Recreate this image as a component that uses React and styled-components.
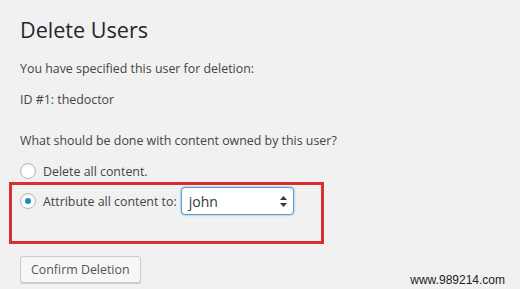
import styled, { createGlobalStyle } from 'styled-components';

const GlobalStyle = createGlobalStyle`
	body {
		margin: 0;
		background: #f1f1f1;
		font-family: "Open Sans", "Liberation Sans", sans-serif;
		font-size: 12.4px;
		color: #444;
	}
`;

const Page = styled.div`
	position: relative;
	width: 520px;
	height: 289px;
	padding: 15px 20px 0;
	box-sizing: border-box;
	overflow: hidden;
`;

const Title = styled.h1`
	margin: 0 0 15px;
	font-size: 21.6px;
	font-weight: 400;
	line-height: 29px;
	color: #23282d;
`;

const Text = styled.p`
	margin: ${({ $gap }) => $gap || '0 0 11px'};
	line-height: 20px;
`;

const Option = styled.label`
	display: flex;
	align-items: center;
	height: ${({ $height }) => $height || '20px'};
	gap: 7px;
`;

const Radio = styled.span`
	position: relative;
	flex: none;
	width: 16px;
	height: 16px;
	box-sizing: border-box;
	border-radius: 50%;
	border: 1px solid #b4b9be;
	background: #fff;
	box-shadow: inset 0 1px 2px rgba(0, 0, 0, 0.1);
	${({ $checked }) =>
		$checked &&
		`
		&::after {
			content: '';
			position: absolute;
			left: 4px;
			top: 4px;
			width: 6px;
			height: 6px;
			border-radius: 50%;
			background: #1e8cbe;
		}
	`}
`;

const Highlight = styled.div`
	margin: 1px 0 0 -11px;
	width: 315px;
	height: 62px;
	box-sizing: border-box;
	border: 3px solid #d9302f;
	padding: 2px 0 0 8px;
`;

const Select = styled.div`
	display: flex;
	align-items: center;
	justify-content: space-between;
	width: 113px;
	height: 28px;
	margin-left: -3px;
	box-sizing: border-box;
	padding: 0 6px 0 7px;
	border: 1px solid #5b9dd9;
	border-radius: 4px;
	background: #fff;
	box-shadow: 0 0 2px rgba(30, 140, 190, 0.8);
	font-size: 14px;
	color: #32373c;
`;

const Button = styled.button`
	display: block;
	margin-top: 12px;
	height: 27px;
	padding: 0 10px 1px;
	border: 1px solid #ccc;
	border-radius: 3px;
	background: #f7f7f7;
	box-shadow: 0 1px 0 #ccc;
	font-family: inherit;
	font-size: 12.4px;
	color: #555;
`;

const Watermark = styled.div`
	position: absolute;
	right: 15px;
	bottom: 2px;
	font-family: "Liberation Sans", Arial, sans-serif;
	font-size: 12px;
	color: #222;
`;

const Arrows = () => (
	<svg width="7" height="11" viewBox="0 0 7 11">
		<path d="M3.5 0 L7 4 L0 4 Z" fill="#32373c" />
		<path d="M0 7 L7 7 L3.5 11 Z" fill="#32373c" />
	</svg>
);

export default function App() {
	return (
		<>
			<GlobalStyle />
			<Page>
				<Title>Delete Users</Title>
				<Text>You have specified this user for deletion:</Text>
				<Text $gap="0 0 21px">ID #1: thedoctor</Text>
				<Text $gap="0 0 10px">What should be done with content owned by this user?</Text>
				<Option>
					<Radio />
					Delete all content.
				</Option>
				<Highlight>
					<Option $height="28px">
						<Radio $checked />
						Attribute all content to:
						<Select>
							john
							<Arrows />
						</Select>
					</Option>
				</Highlight>
				<Button>Confirm Deletion</Button>
				<Watermark>www.989214.com</Watermark>
			</Page>
		</>
	);
}
